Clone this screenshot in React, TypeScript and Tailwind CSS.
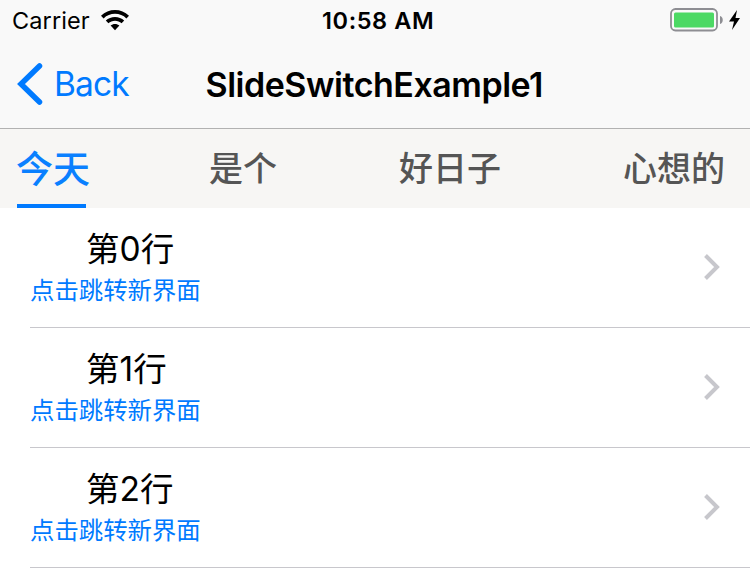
const rows = [
  { title: "第0行", detail: "点击跳转新界面" },
  { title: "第1行", detail: "点击跳转新界面" },
  { title: "第2行", detail: "点击跳转新界面" },
];

function StatusBar() {
  return (
    <div className="flex h-10 items-center pl-3 pr-2">
      <div className="flex w-[310px] items-center">
        <span className="w-[78px] whitespace-nowrap pt-px text-[23.500px] leading-10 tracking-[0.100px]">Carrier</span>
        <svg className="ml-[11px]" width="28" height="21" viewBox="0 0 28 21">
          <path d="M14 0C8.700 0 3.900 2 0 5.700L2.600 8.400C5.700 5.400 9.700 3.800 14 3.800S22.300 5.400 25.400 8.400L28 5.700C24.100 2 19.300 0 14 0Z" />
          <path d="M14 7C10.500 7 7.300 8.300 4.800 10.600L7.400 13.300C9.200 11.600 11.500 10.700 14 10.700S18.800 11.600 20.600 13.300L23.200 10.600C20.700 8.300 17.500 7 14 7Z" />
          <path d="M14 14C12.300 14 10.800 14.600 9.600 15.600L14 20.200L18.400 15.600C17.200 14.600 15.700 14 14 14Z" />
        </svg>
      </div>
      <span className="whitespace-nowrap pt-px text-[23.500px] font-semibold leading-10 tracking-[0.600px]">10:58 AM</span>
      <svg className="ml-auto" width="72" height="24" viewBox="0 0 72 24">
        <rect x="1" y="1" width="46" height="21.500" rx="4.500" fill="none" stroke="#8e8e93" strokeWidth="1.800" />
        <rect x="4" y="4.500" width="40" height="15" rx="1.500" fill="#4cd964" />
        <path d="M50 8C53.700 9 53.700 15 50 16Z" fill="#8e8e93" />
        <path d="M67 2L59 13.500H64L62 22L70 10H65.500Z" />
      </svg>
    </div>
  );
}

export default function App() {
  return (
    <div className="h-[572px] w-[750px] overflow-hidden bg-white font-['Inter','Noto_Sans_CJK_SC',sans-serif] text-black">
      <header className="h-[129px] border-b border-[#b2b2b2] bg-[#f9f9f9]">
        <StatusBar />
        <div className="flex h-[88px] items-center pl-[17px]">
          <div className="flex w-[188.500px] items-center text-[#007aff]">
            <svg width="26" height="42" viewBox="0 0 26 42" fill="none" stroke="currentColor" strokeWidth="5.500" strokeLinecap="round">
              <path d="M22.500 3L4 21L22.500 39" />
            </svg>
            <span className="ml-[11px] text-[33.500px] tracking-[-0.900px]">Back</span>
          </div>
          <h1 className="whitespace-nowrap text-[34px] font-semibold tracking-[-0.480px]">SlideSwitchExample1</h1>
        </div>
      </header>
      <nav className="flex h-[79px] bg-[#f7f6f4] font-['Noto_Sans_CJK_SC',sans-serif] text-[34px] font-medium leading-[76px] text-[#555]">
        <div className="ml-[17px] h-full w-[69px] whitespace-nowrap border-b-4 border-[#007aff] text-[37px] text-[#0a80ff]">
          <span className="-ml-px">今天</span>
        </div>
        <div className="ml-[123px]">是个</div>
        <div className="ml-[122px]">好日子</div>
        <div className="ml-[122px]">心想的</div>
      </nav>
      <main>
        {rows.map((row) => (
          <div key={row.title} className="flex h-[120px] pl-[30px]">
            <div className="flex flex-1 items-center justify-between border-b border-[#c8c7cc] pr-[30px]">
              <div className="pt-px">
                <div className="ml-[56px] pt-px text-[33.500px] leading-[44px]">{row.title}</div>
                <div className="text-[24.400px] leading-[39px] text-[#007aff]">{row.detail}</div>
              </div>
              <svg className="mb-0.5" width="16" height="26" viewBox="0 0 16 26" fill="none" stroke="#c7c7cc" strokeWidth="4">
                <path d="M1.500 1.500L13 13L1.500 24.500" />
              </svg>
            </div>
          </div>
        ))}
      </main>
    </div>
  );
}
